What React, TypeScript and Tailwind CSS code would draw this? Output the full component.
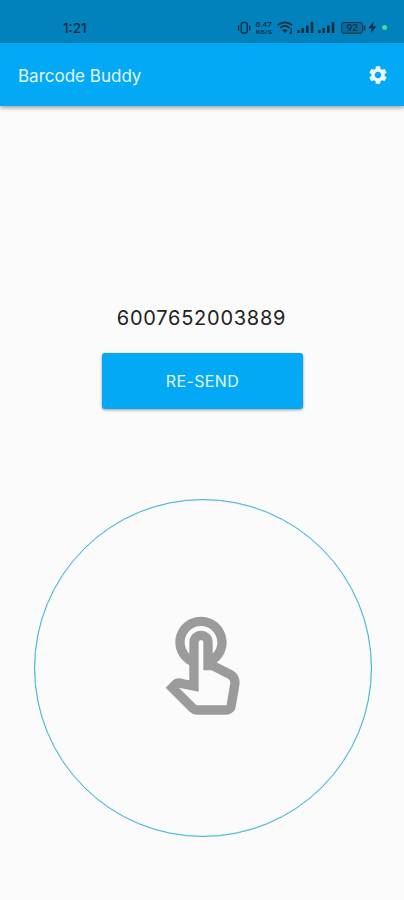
import { MdOutlineTouchApp, MdSettings } from 'react-icons/md';

function StatusIcons() {
  return (
    <svg className="h-[18px] w-[152px]" viewBox="237 18 152 18" fill="none" stroke="#082c40">
      {/* vibrate */}
      <rect x="241.3" y="22.5" width="6" height="10.5" rx="2" strokeWidth="1.3" />
      <path d="M238.6 25.5v5M249.8 25.5v5" strokeWidth="1.4" />
      {/* network speed */}
      <g fill="#082c40" stroke="none" fontFamily="Roboto, sans-serif" fontWeight="500">
        <text x="255.5" y="27" fontSize="8" textLength="16.5" lengthAdjust="spacingAndGlyphs">0.47</text>
        <text x="256" y="34.4" fontSize="5" textLength="16" lengthAdjust="spacingAndGlyphs">KB/S</text>
      </g>
      {/* wifi */}
      <path d="M277.7 25.2c4.2-3.8 10.2-3.8 14.4 0M280.2 28c2.8-2.4 6.6-2.4 9.4 0" strokeWidth="1.7" />
      <path d="M282.3 30.2c1.6-1.3 3.6-1.3 5.2 0l-2.6 3z" fill="#082c40" stroke="none" />
      <path d="M291.2 28v6M289.7 32.5l1.5 1.5" strokeWidth="1.2" />
      {/* two sims */}
      <path d="M298.5 30v3M302.8 28v5M307.3 25.5v7.5M312 22v11" strokeWidth="2.5" />
      <path d="M319.5 30v3M323.8 28v5M328.3 25.5v7.5M333 22v11" strokeWidth="2.5" />
      {/* battery */}
      <rect x="341.5" y="22.5" width="21" height="10.8" rx="2.5" strokeWidth="1" fill="#086b9b" />
      <path d="M364.5 25.5v5" strokeWidth="1.6" />
      <text x="346.5" y="31" fontSize="8.5" fontFamily="Roboto, sans-serif" fill="#082c40" stroke="none" textLength="11.5" lengthAdjust="spacingAndGlyphs">92</text>
      <path d="M373.5 21.5l-5 6.8h3.2l-1 5 5.6-7h-3.2z" fill="#082c40" stroke="none" />
      <circle cx="384.6" cy="27.5" r="2.5" fill="#43d99a" stroke="none" />
    </svg>
  );
}

export default function App() {
  return (
    <div className="flex h-[900px] w-[404px] flex-col overflow-hidden bg-[#fbfbfb] font-['Inter',sans-serif]">
      <div className="flex h-[43px] shrink-0 items-start justify-between bg-[#0282bc] pt-[18px] pr-[15px] pl-[63px]">
        <span className="text-[13.5px] leading-5 font-medium text-[#082c40]">1:21</span>
        <StatusIcons />
      </div>

      <header className="flex h-[63px] shrink-0 items-center justify-between bg-[#03a9f4] pr-[15px] pl-[18px] shadow-[0_2px_4px_rgba(0,0,0,0.35)]">
        <h1 className="pt-1 text-[17px] text-[#e0f7ff]">Barcode Buddy</h1>
        <MdSettings className="size-[22px] text-[#f0fbff]" />
      </header>

      <main className="flex flex-col items-center">
        <p className="mt-[198px] mr-px text-[20px] leading-7 tracking-[0.75px] text-[#222]">6007652003889</p>
        <button className="mt-[21px] ml-px h-14 w-[201px] rounded-[3px] bg-[#03a9f4] text-base tracking-[0.4px] text-[#e0f7ff] shadow-[0_1px_3px_rgba(0,0,0,0.4)]">
          RE-SEND
        </button>
        <div className="mt-[90px] ml-px flex size-[338px] items-center justify-center rounded-full border border-[#3fb4d4] shadow-[inset_0_0_1px_#4ab9d6]">
          <MdOutlineTouchApp className="size-28 text-[#9b9b9b]" />
        </div>
      </main>
    </div>
  );
}
